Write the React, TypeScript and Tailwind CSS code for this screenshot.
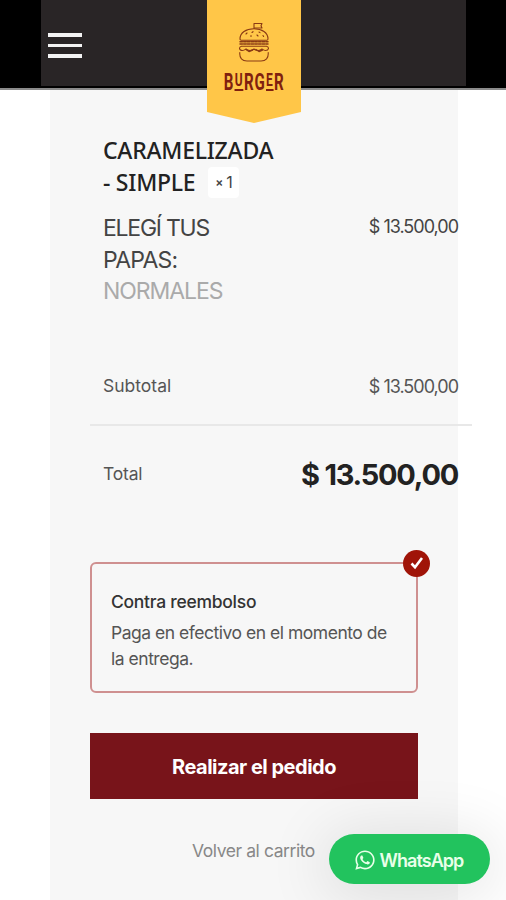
import { FaWhatsapp } from "react-icons/fa";

function BurgerIcon() {
  return (
    <svg
      width="32"
      height="41"
      viewBox="0 0 32 41"
      fill="none"
      stroke="#8a3a14"
      strokeWidth="1.1"
      strokeLinecap="round"
      strokeLinejoin="round"
    >
      <path d="M16 6.500V1.500h8l-1 2.200 1 2.300H16" />
      <path d="M2 17C2 10.500 8 6.800 16 6.800S30 10.500 30 17c0 .8-.5 1.200-1.200 1.200H3.200C2.500 18.200 2 17.800 2 17Z" />
      <path d="M8 12l1-1M13 14.500v-1M14 10.500l1-.8M19 13l1 1M21 10l1 .6M25 13.500l.6 1" />
      <path d="M2 19.800h28M2 22h28" strokeWidth="1.500" strokeDasharray="2.500 1.200" />
      <path d="M3.500 24.200C.5 25 1 28.500 4.500 28.500c1.500 0 2.500-.8 3.500-1.500 2 2 6 2 8 0 2 2 6 2 8 0 1 .7 2 1.500 3.500 1.500 3.500 0 4-3.500 1-4.300Z" />
      <path d="M8 27.500l3 2 3.500-1.500M18 27.500l3 2 3.500-1.500" strokeWidth="1.400" />
      <path d="M1.800 30.500c-.5 5.500 2.400 8.500 7.200 8.500h14c4.800 0 7.700-3 7.200-8.500" />
    </svg>
  );
}

function Header() {
  return (
    <header className="h-[90px] bg-black border-b-2 border-[#8b8b8b] px-[41px]">
      <div className="relative h-[86px] w-[425px] bg-[#292526] flex items-start">
        <button className="mt-[33px] ml-[7px] flex flex-col gap-[7px]" aria-label="Menu">
          <span className="block w-[34px] h-[3.500px] bg-[#f3f3f3]" />
          <span className="block w-[34px] h-[3.500px] bg-[#f3f3f3]" />
          <span className="block w-[34px] h-[3.500px] bg-[#f3f3f3]" />
        </button>
        <div className="absolute left-[166px] top-0 w-[94px] h-[123px] bg-[#ffc648] [clip-path:polygon(0_0,100%_0,100%_91%,50%_100%,0_91%)] flex flex-col items-center pt-[22px]">
          <BurgerIcon />
          <p className="mt-[8px] flex items-start font-['Roboto'] font-bold text-[24px] leading-[22px] text-[#80200f] tracking-[1.100px] scale-x-[0.630] whitespace-nowrap">
            <span>B</span>
            <span className="text-[19px] leading-[18px] h-[20px] border-b-2 border-[#80200f] mx-[1px]">U</span>
            <span>RG</span>
            <span className="text-[19px] leading-[18px] h-[20px] border-b-2 border-[#80200f] mx-[1px]">E</span>
            <span>R</span>
          </p>
        </div>
      </div>
    </header>
  );
}

function PaymentMethod() {
  return (
    <section className="relative mt-[66px] ml-10 w-[328px] h-[131px] border-2 border-[#cf9090] rounded-[6px] pl-[19px] pt-[25px]">
      <p className="text-[17.500px] leading-[26px] font-medium tracking-[-0.270px] text-[#333]">
        Contra reembolso
      </p>
      <p className="mt-[5px] text-[17.500px] leading-[26px] tracking-[-0.480px] text-[#555] whitespace-nowrap">
        Paga en efectivo en el momento de
        <br />
        la entrega.
      </p>
      <div className="absolute -top-[14px] -right-[14px] size-[27px] rounded-full bg-[#a01408] flex items-center justify-center">
        <svg width="14" height="14" viewBox="0 0 14 14" fill="none" stroke="#fff" strokeWidth="2.600">
          <path d="M1.500 7.500 5 11.200 12 2" />
        </svg>
      </div>
    </section>
  );
}

function App() {
  return (
    <div className="relative h-[900px] w-[506px] overflow-hidden bg-white font-['Inter',sans-serif]">
      <Header />
      <main className="ml-[50px] w-[408px] h-[810px] bg-[#f7f7f7] pt-[44px]">
        <div className="ml-[53px] h-16 font-['Noto_Sans',sans-serif] font-medium text-[23px] leading-8 tracking-[-0.250px] text-[#222] whitespace-nowrap">
          <p>CARAMELIZADA</p>
          <div className="flex items-center">
            <p>- SIMPLE</p>
            <span className="ml-[13px] flex h-[31px] w-[31px] items-center justify-center gap-[3px] rounded-[4px] bg-white font-['Inter'] text-[16px] font-normal text-[#444]">
              <span className="text-[12px] font-semibold">×</span>1
            </span>
          </div>
        </div>

        <div className="ml-[53px] mt-[15px] flex justify-between whitespace-nowrap">
          <p className="text-[23px] leading-[31.500px] tracking-[-1.050px] text-[#444]">
            <span className="tracking-[-1.250px]">ELEGÍ TUS</span>
            <br />
            <span className="tracking-[-0.800px]">PAPAS:</span>
            <br />
            <span className="text-[#aaa]">NORMALES</span>
          </p>
          <p className="text-[18px] leading-7 tracking-[-1px] text-[#444]">$ 13.500,00</p>
        </div>

        <div className="ml-[53px] mt-[65px] flex h-7 items-center justify-between whitespace-nowrap text-[#555]">
          <p className="text-[17.500px]">Subtotal</p>
          <p className="text-[18px] tracking-[-1px]">$ 13.500,00</p>
        </div>

        <div className="ml-10 mt-[23px] h-[2px] w-[382px] bg-[#e8e8e8]" />

        <div className="ml-[53px] mt-[28px] flex h-[42px] items-center justify-between whitespace-nowrap">
          <p className="text-[17.500px] tracking-[-0.200px] text-[#555]">Total</p>
          <p className="text-[29px] font-bold tracking-[-1.250px] text-[#222]">$ 13.500,00</p>
        </div>

        <PaymentMethod />

        <button className="ml-10 mt-[40px] h-[66px] w-[328px] bg-[#78141a] pt-[2px] text-[20px] font-bold tracking-[-0.500px] text-white">
          Realizar el pedido
        </button>
        <p className="ml-[142px] mt-[39px] text-[17.500px] leading-[26px] tracking-[-0.430px] text-[#888]">
          Volver al carrito
        </p>
      </main>

      <a className="absolute left-[329px] top-[834px] flex h-[50px] w-[161px] items-center justify-center gap-[4px] rounded-full bg-[#22c35e] pt-[2px] pr-[2px] text-[18px] font-semibold tracking-[-0.950px] text-[#e9ffe9] shadow-[0_6px_60px_8px_rgba(0,0,0,0.100)]">
        <FaWhatsapp size={22} />
        WhatsApp
      </a>
    </div>
  );
}

export default App;
